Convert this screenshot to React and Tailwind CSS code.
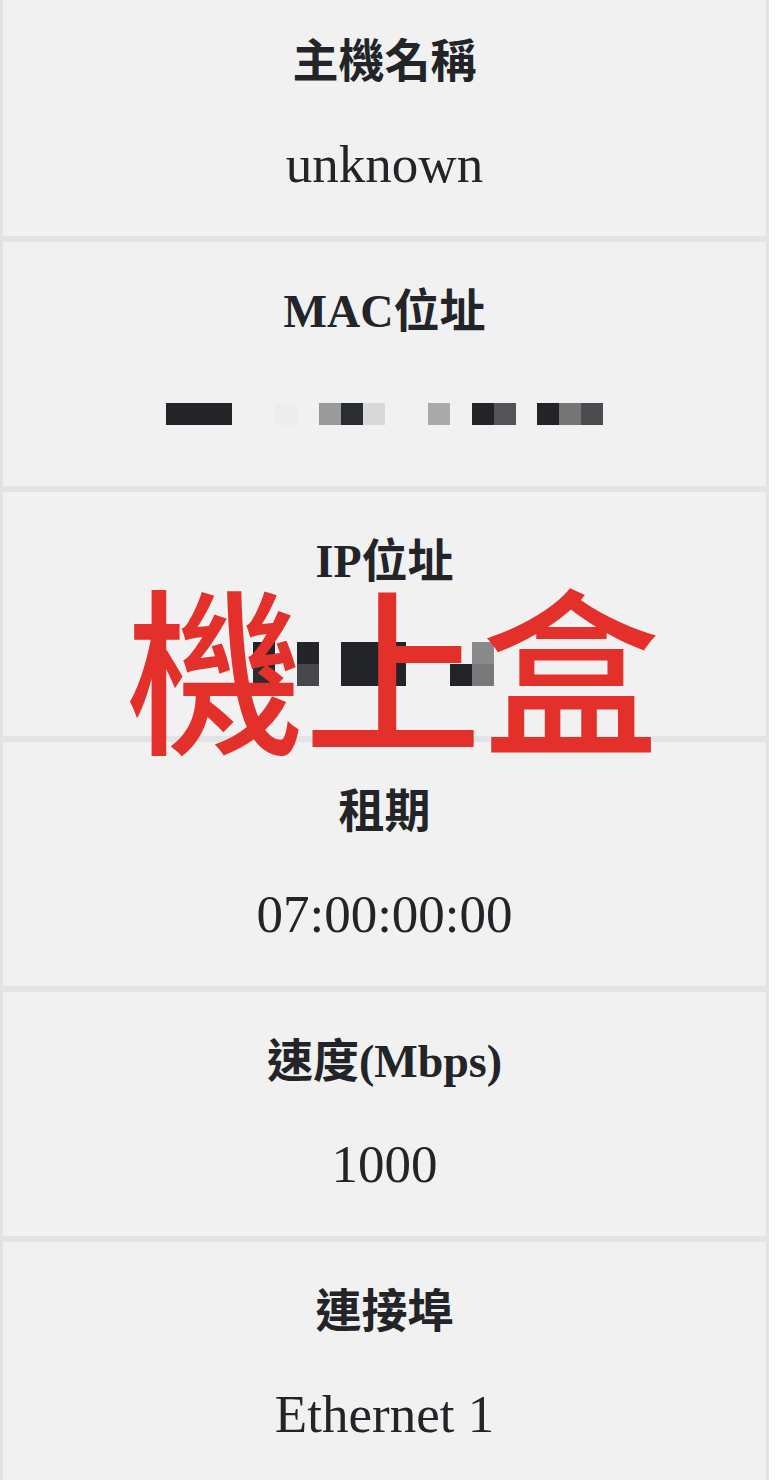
import React from 'react';

const INK = '#222428';

// masked values are drawn as blocks of 22px cells; null = empty cell
const MAC_CELLS = [
  [INK, INK, INK, null, null, '#ededee', null, '#9a9a9b', '#2a2d31', '#d8d8d9', null, null, '#aaaaab', null, INK, '#525457', null, INK, '#737577', '#4a4c50'],
];

const IP_CELLS = [
  [INK, null, INK, null, INK, INK, INK, null, null, null, '#898a8c', null],
  ['#2a2c30', null, '#46484c', null, INK, INK, INK, null, null, INK, '#76787a', null],
];

const rows = [
  { label: '主機名稱', value: 'unknown' },
  { label: 'MAC位址', cells: MAC_CELLS },
  { label: 'IP位址', cells: IP_CELLS },
  { label: '租期', value: '07:00:00:00' },
  { label: '速度(Mbps)', value: '1000' },
  { label: '連接埠', value: 'Ethernet 1' },
];

const Mosaic = ({ cells }) => (
  <div className="flex flex-col">
    {cells.map((line, i) => (
      <div key={i} className="flex">
        {line.map((c, j) => (
          <div key={j} className="w-[21.85px] h-[22px]" style={{ backgroundColor: c || 'transparent' }} />
        ))}
      </div>
    ))}
  </div>
);

const InfoCard = ({ label, value, cells }) => (
  <div className="bg-[#f1f1f2] h-[244px] flex flex-col items-center pt-[42px] gap-[44px]">
    <div className="text-[46px] leading-[56px] font-bold text-[#222428] font-['Liberation_Serif','Noto_Sans_CJK_TC',serif]">
      {label}
    </div>
    <div className="h-[60px] flex items-center justify-center">
      {cells ? (
        <Mosaic cells={cells} />
      ) : (
        <span className="text-[53px] leading-[60px] text-[#222428] font-['Liberation_Serif','Noto_Sans_CJK_TC',serif]">
          {value}
        </span>
      )}
    </div>
  </div>
);

export default function App() {
  return (
    <div className="relative w-[769px] h-[1480px] overflow-hidden bg-[#e1e3e7]">
      <div className="-mt-[8px] px-[3px] flex flex-col gap-[6px]">
        {rows.map((r) => (
          <InfoCard key={r.label} {...r} />
        ))}
      </div>
      <div className="absolute left-[126px] top-[575px] text-[178px] leading-none font-medium text-[#e3302a] whitespace-nowrap font-['Noto_Sans_CJK_TC',sans-serif]">
        機上盒
      </div>
    </div>
  );
}
